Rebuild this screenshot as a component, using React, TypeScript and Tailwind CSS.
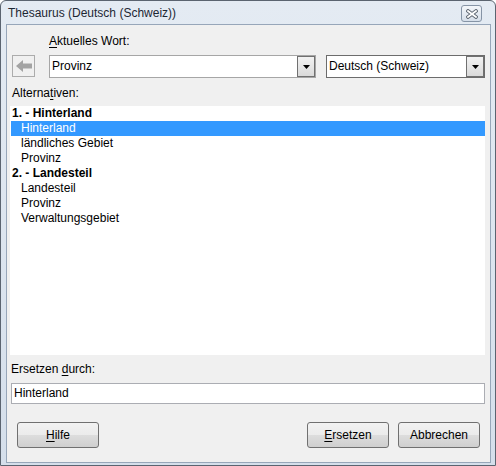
import React from "react";

function Key({ children }: { children: React.ReactNode }) {
  return <span className="underline underline-offset-[2px]">{children}</span>;
}

function DropButton() {
  return (
    <div className="w-[18px] h-full border border-[#707070] bg-gradient-to-b from-[#f2f2f2] to-[#dadada] flex items-center justify-center">
      <svg width="7" height="4" viewBox="0 0 7 4">
        <polygon points="0,0 7,0 3.5,4" fill="#000" />
      </svg>
    </div>
  );
}

function Button({ children }: { children: React.ReactNode }) {
  return (
    <button className="w-[82px] h-[26px] rounded-[3px] border border-[#707070] bg-[linear-gradient(to_bottom,#f2f2f2_0%,#ebebeb_50%,#dddddd_50%,#cfcfcf_100%)] text-black flex items-center justify-center">
      {children}
    </button>
  );
}

export default function App() {
  const rows = [
    { text: "1. - Hinterland", head: true },
    { text: "Hinterland", sel: true },
    { text: "ländliches Gebiet" },
    { text: "Provinz" },
    { text: "2. - Landesteil", head: true },
    { text: "Landesteil" },
    { text: "Provinz" },
    { text: "Verwaltungsgebiet" },
  ];

  return (
    <div className="w-[496px] h-[466px] font-['Liberation_Sans',Arial,sans-serif] text-[12px] leading-[15px] text-black">
      <div className="w-full h-full border border-[#5b6470] rounded-t-[6px] bg-gradient-to-b from-[#e4ebf3] to-[#d5dfeb] flex flex-col">
        {/* title bar */}
        <div className="h-[23px] flex items-start justify-between pl-[7px] pr-[13px]">
          <div className="pt-[5px] text-[#1d2733]">Thesaurus (Deutsch (Schweiz))</div>
          <div className="mt-[4px] w-[21px] h-[17px] rounded-[3px] border border-[#8694a6] bg-gradient-to-b from-[#f3f6fa] to-[#d6dfea] flex items-center justify-center">
            <svg width="12" height="10" viewBox="0 0 12 10">
              <path d="M2 2 L10 8 M10 2 L2 8" stroke="#5d6672" strokeWidth="3.6" strokeLinecap="square" />
              <path d="M2 2 L10 8 M10 2 L2 8" stroke="#ffffff" strokeWidth="1.7" strokeLinecap="square" />
            </svg>
          </div>
        </div>

        {/* client area */}
        <div className="flex-1 ml-[5px] mr-[4px] mb-[2px] border border-[#97a6b9] bg-[#f0f0f0] flex flex-col">
          <div className="mt-[9px] ml-[42px]">
            <Key>A</Key>ktuelles Wort:
          </div>

          <div className="mt-[6px] flex items-start">
            <div className="ml-[5px] w-[23px] h-[22px] border border-[#acacac] bg-[#f0f0f0] flex items-center justify-center">
              <svg width="16" height="12" viewBox="0 0 16 12">
                <polygon points="0,6 7,0 7,3.5 16,3.5 16,8.5 7,8.5 7,12" fill="#a3a3a3" />
              </svg>
            </div>
            <div className="ml-[14px] w-[267px] h-[23px] border border-[#a6a6a6] bg-white flex items-center">
              <div className="flex-1 pl-[2px]">Provinz</div>
              <DropButton />
            </div>
            <div className="ml-[10px] w-[159px] h-[23px] border border-[#6c6c6c] bg-white flex items-center">
              <div className="flex-1 pl-[2px]">Deutsch (Schweiz)</div>
              <DropButton />
            </div>
          </div>

          <div className="mt-[8px] ml-[5px]">
            Alterna<Key>t</Key>iven:
          </div>

          <div className="mt-[5px] ml-[3px] w-[475px] h-[249px] bg-white flex flex-col">
            {rows.map((r, i) => (
              <div
                key={i}
                className={
                  "h-[15px] ml-[1px] " +
                  (r.head ? "pl-[1px] font-bold " : "pl-[10px] ") +
                  (r.sel ? "bg-[#3399ff] text-white" : "")
                }
              >
                {r.text}
              </div>
            ))}
          </div>

          <div className="mt-[7px] ml-[4px]">
            Ersetzen <Key>d</Key>urch:
          </div>

          <div className="mt-[6px] ml-[4px] w-[474px] h-[21px] border border-[#abadb3] bg-white flex items-center pl-[2px]">
            Hinterland
          </div>

          <div className="mt-[18px] flex items-start px-[10px]">
            <Button>
              <Key>H</Key>ilfe
            </Button>
            <div className="flex-1" />
            <Button>
              <Key>E</Key>rsetzen
            </Button>
            <div className="ml-[9px]">
              <Button>Abbrechen</Button>
            </div>
          </div>
        </div>
      </div>
    </div>
  );
}
